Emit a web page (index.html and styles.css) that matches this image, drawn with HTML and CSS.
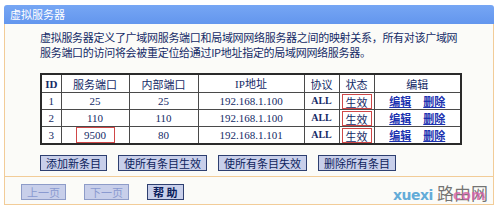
FILE: index.html
```html
<!DOCTYPE html>
<html lang="zh-CN">
<head>
<meta charset="utf-8">
<title>虚拟服务器</title>
<link rel="stylesheet" href="styles.css">
</head>
<body>
<div class="panel">
  <div class="title">虚拟服务器</div>
  <div class="body">
    <p class="desc">虚拟服务器定义了广域网服务端口和局域网网络服务器之间的映射关系，所有对该广域网服务端口的访问将会被重定位给通过IP地址指定的局域网网络服务器。</p>
    <table class="grid">
      <colgroup>
        <col class="c-id"><col class="c-port"><col class="c-in"><col class="c-ip"><col class="c-proto"><col class="c-state"><col class="c-edit">
      </colgroup>
      <thead>
        <tr><th class="latin">ID</th><th>服务端口</th><th>内部端口</th><th><span class="latin">IP</span>地址</th><th>协议</th><th>状态</th><th>编辑</th></tr>
      </thead>
      <tbody>
        <tr><td>1</td><td>25</td><td>25</td><td>192.168.1.100</td><td class="all">ALL</td><td><span class="mark state">生效</span></td><td><a href="#">编辑</a><a href="#">删除</a></td></tr>
        <tr><td>2</td><td>110</td><td>110</td><td>192.168.1.100</td><td class="all">ALL</td><td><span class="mark state">生效</span></td><td><a href="#">编辑</a><a href="#">删除</a></td></tr>
        <tr><td>3</td><td><span class="mark port">9500</span></td><td>80</td><td>192.168.1.101</td><td class="all">ALL</td><td><span class="mark state">生效</span></td><td><a href="#">编辑</a><a href="#">删除</a></td></tr>
      </tbody>
    </table>
    <div class="actions">
      <button class="btn">添加新条目</button>
      <button class="btn">使所有条目生效</button>
      <button class="btn">使所有条目失效</button>
      <button class="btn">删除所有条目</button>
    </div>
    <div class="footer">
      <button class="btn disabled">上一页</button>
      <button class="btn disabled">下一页</button>
      <button class="btn help">帮 助</button>
    </div>
  </div>
</div>
<div class="watermark"><span class="wm-a">xuexi</span><span class="wm-b">路由网</span><span class="wm-c">com</span></div>
</body>
</html>
```

FILE: styles.css
```css
html, body {
  margin: 0;
  padding: 0;
  background: #ffffff;
}
body {
  width: 500px;
  height: 209px;
  overflow: hidden;
  position: relative;
  font-family: "Liberation Serif", "Noto Sans CJK SC", serif;
  font-size: 11px;
  color: #142a66;
}
.panel {
  margin: 5px 0 0 4px;
  width: 490px;
}
.title {
  height: 19px;
  line-height: 19px;
  padding-left: 6px;
  background: linear-gradient(#76a6f4, #6396ee);
  color: #ffffff;
  font-family: "Noto Sans CJK SC", sans-serif;
  border-radius: 3px 3px 0 0;
}
.body {
  height: 181px;
  box-sizing: border-box;
  border: 1px solid #f2cc98;
  border-top: none;
  background: #fbfbf8;
  overflow: hidden;
}
.desc {
  margin: 0;
  padding: 6px 0 0 35px;
  width: 426px;
  line-height: 15px;
  letter-spacing: -0.3px;
  font-family: "Noto Sans CJK SC", sans-serif;
}
.latin {
  font-family: "Liberation Serif", serif;
}
.grid {
  margin: 13px 0 0 35px;
  width: 420px;
  table-layout: fixed;
  border-collapse: collapse;
  border: 2px solid #2a2a2a;
  background: #ffffff;
}
.c-id { width: 20px; }
.c-port { width: 68px; }
.c-in { width: 69px; }
.c-ip { width: 106px; }
.c-proto { width: 35px; }
.c-state { width: 35px; }
.c-edit { width: 87px; }
.grid th, .grid td {
  border: 1px solid #4a4a4a;
  padding: 0;
  text-align: center;
  font-weight: normal;
  white-space: nowrap;
  line-height: 14px;
}
.grid th {
  height: 17px;
  font-family: "Noto Sans CJK SC", sans-serif;
}
.grid th.latin {
  font-family: "Liberation Serif", serif;
  font-weight: bold;
}
.grid td {
  height: 16px;
}
.grid td.all {
  font-size: 10px;
  font-weight: bold;
}
.mark {
  display: block;
  margin: 0 auto;
  height: 15px;
  line-height: 14px;
  border: 1px solid #d04848;
  box-sizing: border-box;
}
.mark.port { width: 39px; height: 16px; }
.mark.state { width: 30px; font-family: "Noto Sans CJK SC", sans-serif; }
.grid a {
  color: #1c32b0;
  font-family: "Noto Sans CJK SC", sans-serif;
  font-weight: bold;
  text-decoration: underline;
  margin: 0 6px;
}
.actions {
  display: flex;
  gap: 11px;
  margin: 10px 0 0 35px;
}
.btn {
  height: 16px;
  padding: 0 5px;
  margin: 0;
  border: 1px solid #2e3f70;
  background: #c8cfea;
  color: #0c1d5c;
  font-family: "Noto Sans CJK SC", sans-serif;
  font-size: 11px;
  line-height: 14px;
  border-radius: 0;
}
.footer {
  display: flex;
  gap: 18px;
  margin-top: 5px;
  border-top: 1px solid #f2cc98;
  padding: 7px 0 0 16px;
}
.btn.disabled {
  color: #8a9ad0;
  border-color: #8e9cc8;
}
.btn.help {
  font-weight: bold;
}
.watermark {
  position: absolute;
  left: 393px;
  top: 182px;
  height: 24px;
  width: 100px;
}
.wm-a {
  position: absolute;
  left: 0;
  top: 5px;
  font-family: "DejaVu Sans", sans-serif;
  font-size: 14px;
  font-weight: bold;
  color: #63acd8;
  letter-spacing: -0.5px;
}
.wm-b {
  position: absolute;
  left: 44px;
  top: 0;
  font-family: "Noto Sans CJK SC", sans-serif;
  font-size: 17px;
  line-height: 22px;
  color: rgba(70, 70, 70, 0.75);
}
.wm-c {
  position: absolute;
  left: 60px;
  top: 5px;
  font-family: "DejaVu Sans", sans-serif;
  font-size: 14px;
  font-weight: bold;
  color: rgba(214, 96, 168, 0.8);
}
```
